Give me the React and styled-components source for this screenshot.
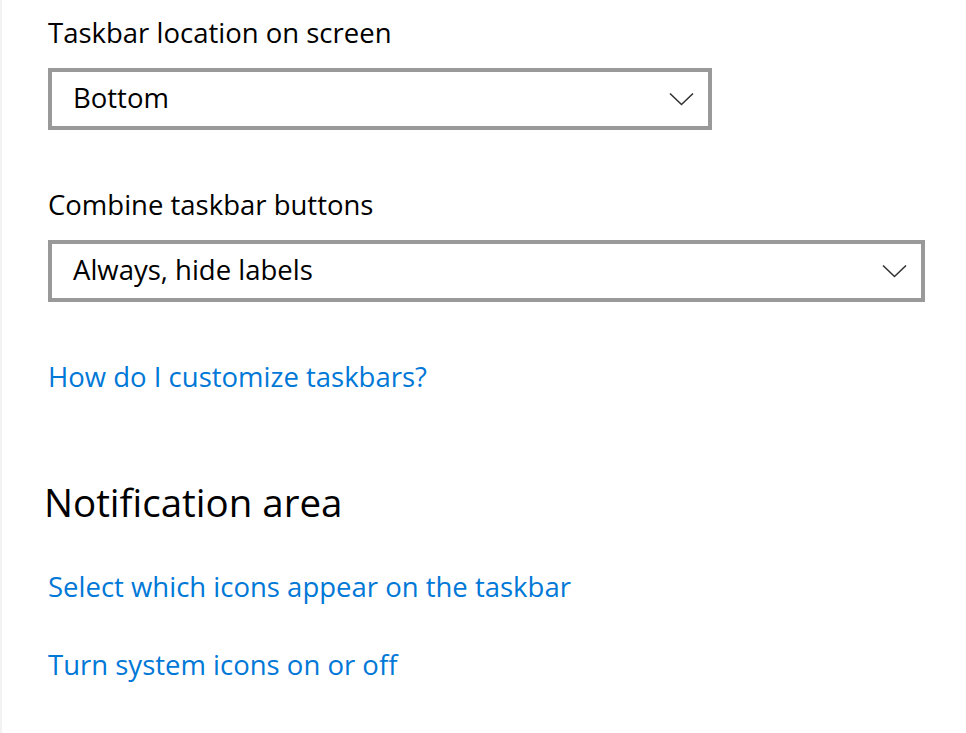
import React from 'react';
import styled, { createGlobalStyle } from 'styled-components';

const GlobalStyle = createGlobalStyle`
  html, body { margin: 0; padding: 0; background: #fff; }
  body { font-family: "Open Sans", "Noto Sans", sans-serif; color: #000; }
`;

const Chevron = () => (
  <svg width="25" height="14" viewBox="0 0 25 14" fill="none">
    <path d="M1 1.5 L12.5 12.5 L24 1.5" stroke="#333" strokeWidth="1.6" />
  </svg>
);

const Page = styled.div`
  min-height: 733px;
  box-sizing: border-box;
  border-left: 2px solid #f2f2f2;
  padding: 15px 0 0 46px;
  display: flex;
  flex-direction: column;
`;

const Field = styled.div`
  display: flex;
  flex-direction: column;
  gap: 17px;
  margin-bottom: ${({ $gap }) => $gap}px;
`;

const Label = styled.div`
  font-size: 27.5px;
  line-height: 36px;
`;

const Select = styled.div`
  box-sizing: border-box;
  width: ${({ $width }) => $width}px;
  height: 62px;
  border: 4px solid #999;
  display: flex;
  align-items: center;
  justify-content: space-between;
  padding: 0 14px 0 21px;
  font-size: 27.5px;
`;

const SelectValue = styled.span`
  margin-bottom: 4px;
`;

const Link = styled.a`
  display: block;
  font-size: 27.5px;
  line-height: 36px;
  color: #0078d7;
  text-decoration: none;
  margin-bottom: ${({ $gap }) => $gap || 0}px;
`;

const Heading = styled.h2`
  margin: 0 0 42px -4px;
  font-size: 38.5px;
  font-weight: 400;
  line-height: 50px;
`;

export default function App() {
  return (
    <>
      <GlobalStyle />
      <Page>
        <Field $gap={57}>
          <Label>Taskbar location on screen</Label>
          <Select $width={664}>
            <SelectValue>Bottom</SelectValue>
            <Chevron />
          </Select>
        </Field>
        <Field $gap={57}>
          <Label>Combine taskbar buttons</Label>
          <Select $width={877}>
            <SelectValue>Always, hide labels</SelectValue>
            <Chevron />
          </Select>
        </Field>
        <Link href="#" $gap={82}>How do I customize taskbars?</Link>
        <Heading>Notification area</Heading>
        <Link href="#" $gap={42}>Select which icons appear on the taskbar</Link>
        <Link href="#">Turn system icons on or off</Link>
      </Page>
    </>
  );
}
